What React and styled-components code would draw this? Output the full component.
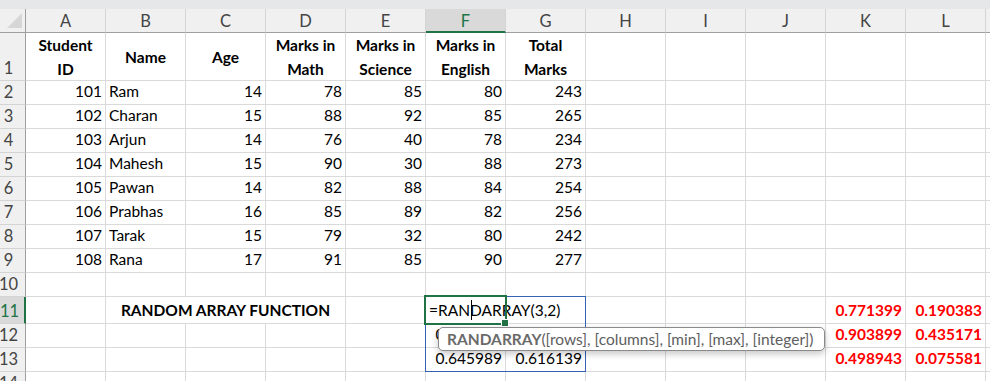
import React from 'react';
import styled, { createGlobalStyle, css } from 'styled-components';

const GlobalStyle = createGlobalStyle`
    body {
        margin: 0;
        background: #fff;
        font-family: Lato, "Liberation Sans", sans-serif;
        overflow: hidden;
    }
`;

const Sheet = styled.div`
    position: relative;
    width: 990px;
    height: 381px;
    overflow: hidden;
    background: #fff;
`;

const TopStrip = styled.div`
    height: 9px;
    background: #e6e7e8;
`;

const Grid = styled.div`
    display: grid;
    grid-template-columns: 26px repeat(12, 80px) 1fr;
    grid-template-rows: 24px 48px repeat(9, 24px) 27px 24px 24px 24px;
`;

const Corner = styled.div`
    background: #f0f0f0;
    border-right: 1px solid #9f9f9f;
    border-bottom: 1px solid #9f9f9f;
    display: flex;
    align-items: flex-end;
    justify-content: flex-end;
    padding: 0 3px 4px 0;
    box-sizing: border-box;
`;

const ColHead = styled.div`
    box-sizing: border-box;
    background: ${p => p.$active ? '#d9d9d9' : '#f0f0f0'};
    border-right: 1px solid #d4d4d4;
    border-bottom: ${p => p.$active ? '2px solid #217346' : '1px solid #9f9f9f'};
    color: ${p => p.$active ? '#217346' : '#444'};
    font-size: 16.5px;
    display: flex;
    align-items: center;
    justify-content: center;
    padding-top: ${p => p.$active ? '1px' : '0'};
`;

const RowHead = styled.div`
    box-sizing: border-box;
    background: ${p => p.$active ? '#d9d9d9' : '#f0f0f0'};
    border-right: ${p => p.$active ? '2px solid #217346' : '1px solid #9f9f9f'};
    border-bottom: 1px solid #d4d4d4;
    color: ${p => p.$active ? '#217346' : '#444'};
    font-size: 16.5px;
    display: flex;
    align-items: flex-end;
    justify-content: center;
    padding: 0 ${p => p.$active ? '5px' : '8px'} 2px 0;
`;

const Cell = styled.div`
    box-sizing: border-box;
    border-right: 1px solid #dadada;
    border-bottom: 1px solid #dadada;
    font-size: 15.5px;
    color: ${p => p.$color || '#000'};
    font-weight: ${p => p.$bold ? 700 : 400};
    display: flex;
    align-items: flex-end;
    justify-content: ${p => p.$align === 'right' ? 'flex-end' : p.$align === 'center' ? 'center' : 'flex-start'};
    padding: 0 3px 4px 3px;
    white-space: nowrap;
    overflow: hidden;
    ${p => p.$span && css`grid-column: span ${p.$span};`}
`;

const HeadCell = styled(Cell)`
    align-items: center;
    justify-content: center;
    text-align: center;
    white-space: normal;
    font-weight: 700;
    line-height: 24px;
    padding: 0 4px;
`;

const ActiveCell = styled.div`
    position: absolute;
    left: 424px;
    top: 295px;
    width: 83px;
    height: 30px;
    border: 2px solid #217346;
    box-sizing: border-box;
    pointer-events: none;
    z-index: 3;
`;

const FillHandle = styled.div`
    position: absolute;
    right: -4px;
    bottom: -4px;
    width: 6px;
    height: 6px;
    background: #217346;
    border: 1px solid #fff;
`;

const SpillRange = styled.div`
    position: absolute;
    left: 425px;
    top: 296px;
    width: 161px;
    height: 76px;
    border: 1px solid #3563b4;
    box-sizing: border-box;
    z-index: 2;
`;

const Caret = styled.div`
    position: absolute;
    left: 471px;
    top: 300px;
    width: 1px;
    height: 20px;
    background: #000;
    z-index: 4;
`;

const Tooltip = styled.div`
    position: absolute;
    left: 438px;
    top: 327px;
    width: 387px;
    height: 24px;
    box-sizing: border-box;
    background: #fff;
    border: 1px solid #8a8a8a;
    border-radius: 5px;
    box-shadow: 0 3px 7px rgba(0, 0, 0, 0.22);
    padding: 0 0 0 8px;
    display: flex;
    align-items: center;
    font-size: 15.5px;
    color: #5e5e5e;
    white-space: nowrap;
    z-index: 5;

    b {
        color: #6a6a6a;
        font-weight: 700;
    }
`;

const cols = ['A', 'B', 'C', 'D', 'E', 'F', 'G', 'H', 'I', 'J', 'K', 'L', ''];

const headers = ['Student ID', 'Name', 'Age', 'Marks in Math', 'Marks in Science', 'Marks in English', 'Total Marks'];

const students = [
    [101, 'Ram', 14, 78, 85, 80, 243],
    [102, 'Charan', 15, 88, 92, 85, 265],
    [103, 'Arjun', 14, 76, 40, 78, 234],
    [104, 'Mahesh', 15, 90, 30, 88, 273],
    [105, 'Pawan', 14, 82, 88, 84, 254],
    [106, 'Prabhas', 16, 85, 89, 82, 256],
    [107, 'Tarak', 15, 79, 32, 80, 242],
    [108, 'Rana', 17, 91, 85, 90, 277],
];

const red = [
    ['0.771399', '0.190383'],
    ['0.903899', '0.435171'],
    ['0.498943', '0.075581'],
];

const spill = [
    null,
    ['0.382716', ''],
    ['0.645989', '0.616139'],
];

const Empty = ({ n }) => Array.from({ length: n }).map((_, i) => <Cell key={'e' + i} />);

function App() {
    return (
        <Sheet>
            <GlobalStyle />
            <TopStrip />
            <Grid>
                <Corner>
                    <svg width="15" height="15" viewBox="0 0 15 15">
                        <polygon points="15,0 15,15 0,15" fill="#d6d6d6" />
                    </svg>
                </Corner>
                {cols.map((c, i) => (
                    <ColHead key={i} $active={c === 'F'}>{c}</ColHead>
                ))}

                <RowHead>1</RowHead>
                {headers.map(h => <HeadCell key={h}>{h}</HeadCell>)}
                <Empty n={6} />

                {students.map((r, i) => (
                    <React.Fragment key={r[0]}>
                        <RowHead>{i + 2}</RowHead>
                        {r.map((v, j) => (
                            <Cell key={j} $align={j === 1 ? 'left' : 'right'}>{v}</Cell>
                        ))}
                        <Empty n={6} />
                    </React.Fragment>
                ))}

                <RowHead>10</RowHead>
                <Empty n={13} />

                {red.map((pair, i) => (
                    <React.Fragment key={i}>
                        <RowHead $active={i === 0}>{11 + i}</RowHead>
                        <Cell />
                        {i === 0
                            ? <Cell $span={3} $bold $align="center">RANDOM ARRAY FUNCTION</Cell>
                            : <Empty n={3} />}
                        <Cell />
                        {i === 0
                            ? <Cell $span={2}>=RANDARRAY(3,2)</Cell>
                            : <>
                                <Cell $align="right">{spill[i][0]}</Cell>
                                <Cell $align="right">{spill[i][1]}</Cell>
                            </>}
                        <Empty n={3} />
                        <Cell $align="right" $bold $color="#ff0000">{pair[0]}</Cell>
                        <Cell $align="right" $bold $color="#ff0000">{pair[1]}</Cell>
                        <Cell />
                    </React.Fragment>
                ))}

                <RowHead>14</RowHead>
                <Empty n={13} />
            </Grid>

            <SpillRange />
            <ActiveCell>
                <FillHandle />
            </ActiveCell>
            <Caret />
            <Tooltip>
                <b>RANDARRAY</b>([rows], [columns], [min], [max], [integer])
            </Tooltip>
        </Sheet>
    );
}

export default App;
